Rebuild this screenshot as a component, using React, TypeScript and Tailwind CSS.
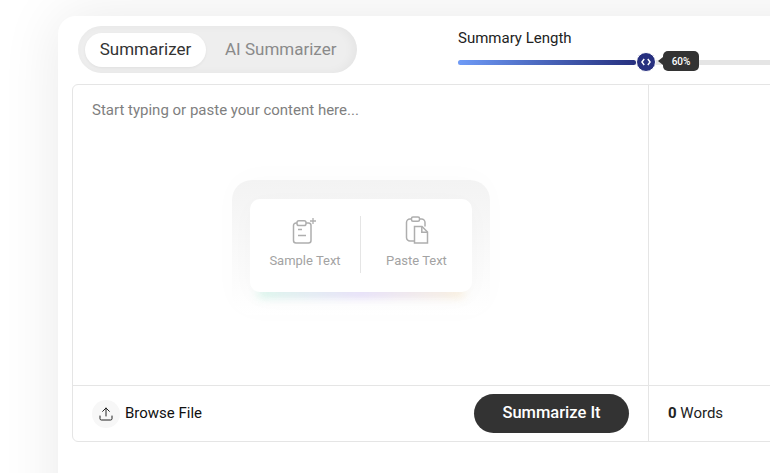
import React from 'react';
import { Upload } from 'lucide-react';

const SampleIcon: React.FC = () => (
  <svg width="26" height="28" viewBox="0 0 26 28" fill="none" stroke="#aeaeae" strokeWidth="1.5">
    <path d="M5 7H4A2.500 2.500 0 0 0 1.500 9.500v15A2.500 2.500 0 0 0 4 27h12.500a2.500 2.500 0 0 0 2.500-2.500v-15A2.500 2.500 0 0 0 16.500 7H14" />
    <rect x="5" y="4.800" width="9" height="4.700" rx="1.800" />
    <path d="M6 13.500h4M6 19.500h8" />
    <path d="M18 5h6M21 2v6" strokeWidth="1.300" />
  </svg>
);

const PasteIcon: React.FC = () => (
  <svg width="26" height="28" viewBox="0 0 26 28" fill="none" stroke="#aeaeae" strokeWidth="1.500">
    <path d="M7 3H6A3.500 3.500 0 0 0 2.500 6.500v15A3.500 3.500 0 0 0 6 25h4.500" />
    <path d="M15.500 3h2A3.500 3.500 0 0 1 21 6.500v4" />
    <rect x="7.500" y="1" width="8" height="4.200" rx="1.500" />
    <path d="M10.500 10.500h7.500l5.500 5.500v11H10.500z" />
    <path d="M17.800 10.500v5.700h5.700" />
  </svg>
);

export default function App() {
  return (
    <div className="h-[473px] w-[770px] overflow-hidden bg-white pl-[58px] pt-4 font-['Roboto',sans-serif]">
      <div className="h-[600px] w-[800px] rounded-tl-[18px] bg-white pl-[14px] pt-[10px] shadow-[0_0_60px_rgba(0,0,0,0.09)]">
        {/* Top bar */}
        <div className="flex h-[58px] items-start">
          <div className="ml-[6px] flex h-[47px] w-[279px] items-center rounded-full bg-[#eeeeee] pl-[7px] shadow-[inset_-4px_0_10px_rgba(0,0,0,0.04)]">
            <div className="flex h-[34px] w-[121px] items-center justify-center rounded-full bg-white text-[17px] text-[#333333] shadow-[0_1px_3px_rgba(0,0,0,0.06)]">
              Summarizer
            </div>
            <div className="ml-[19px] text-[17px] text-[#8a8a8a]">AI Summarizer</div>
          </div>
          <div className="ml-[101px] w-[400px]">
            <div className="text-[15px] leading-[24px] text-[#222222]">Summary Length</div>
            <div className="relative mt-[10px] h-[5px] w-full rounded-full bg-[#e5e5e5]">
              <div className="h-full w-[178px] rounded-full bg-gradient-to-r from-[#6f9bf7] to-[#27307f]" />
              <div className="absolute left-[178px] top-[-8px] flex h-[20px] w-[20px] items-center justify-center rounded-full border border-white bg-[#27307f]">
                <svg width="10" height="8" viewBox="0 0 10 8" fill="none" stroke="white" strokeWidth="1.400">
                  <path d="M3.200 1 .9 4l2.300 3M6.800 1l2.300 3-2.300 3" />
                </svg>
              </div>
              <div className="absolute left-[205px] top-[-9px] flex h-[20px] w-[36px] items-center justify-center rounded-[5px] bg-[#333333] text-[10px] font-medium text-white">
                60%
                <span className="absolute left-[-5px] top-[6px] h-0 w-0 border-y-[4px] border-r-[5px] border-y-transparent border-r-[#333333]" />
              </div>
            </div>
          </div>
        </div>

        {/* Editor box */}
        <div className="flex h-[358px] w-[760px] flex-col rounded-[6px] border border-[#e5e5e5]">
          <div className="flex flex-1">
            <div className="relative w-[576px] border-r border-[#e5e5e5] pl-[19px] pt-[14px] text-[15px] leading-[22px] text-[#7f7f7f]">
              Start typing or paste your content here...
              <div className="absolute left-[159px] top-[95px] flex h-[135px] w-[258px] justify-center rounded-[20px] bg-gradient-to-b from-[#f3f3f3] to-white pt-[19px] shadow-[0_-4px_30px_rgba(0,0,0,0.015)]">
                <div className="absolute left-[26px] top-[109px] h-[8px] w-[206px] rounded-full bg-gradient-to-r from-[#c4f5e2] via-[#d9cdfa] to-[#fbeacb] opacity-80 blur-[5px]" />
                <div className="relative flex h-[93px] w-[222px] items-start rounded-[10px] bg-white pt-[17px] text-[13px] leading-[16px] text-[#a3a3a3] shadow-[0_6px_24px_rgba(0,0,0,0.025)]">
                  <div className="flex h-[57px] w-[111px] flex-col items-center border-r border-[#e5e5e5]">
                    <SampleIcon />
                    <span className="mt-[9px]">Sample Text</span>
                  </div>
                  <div className="flex h-[57px] w-[111px] flex-col items-center">
                    <PasteIcon />
                    <span className="mt-[9px]">Paste Text</span>
                  </div>
                </div>
              </div>
            </div>
            <div className="flex-1" />
          </div>
          <div className="flex h-[56px] items-center border-t border-[#e5e5e5]">
            <div className="flex h-full w-[576px] items-center border-r border-[#e5e5e5] px-[19px]">
              <div className="flex h-[28px] w-[28px] items-center justify-center rounded-full bg-[#f7f7f7]">
                <Upload className="h-4 w-4 text-[#222222]" strokeWidth={1.500} />
              </div>
              <span className="ml-[5px] text-[15px] text-[#111111]">Browse File</span>
              <button className="ml-auto h-[39px] w-[155px] rounded-full bg-[#333333] text-[16.5px] font-medium text-white">
                Summarize It
              </button>
            </div>
            <div className="pl-[19px] text-[15px] text-[#222222]">
              <span className="font-bold">0</span> Words
            </div>
          </div>
        </div>
      </div>
    </div>
  );
}
